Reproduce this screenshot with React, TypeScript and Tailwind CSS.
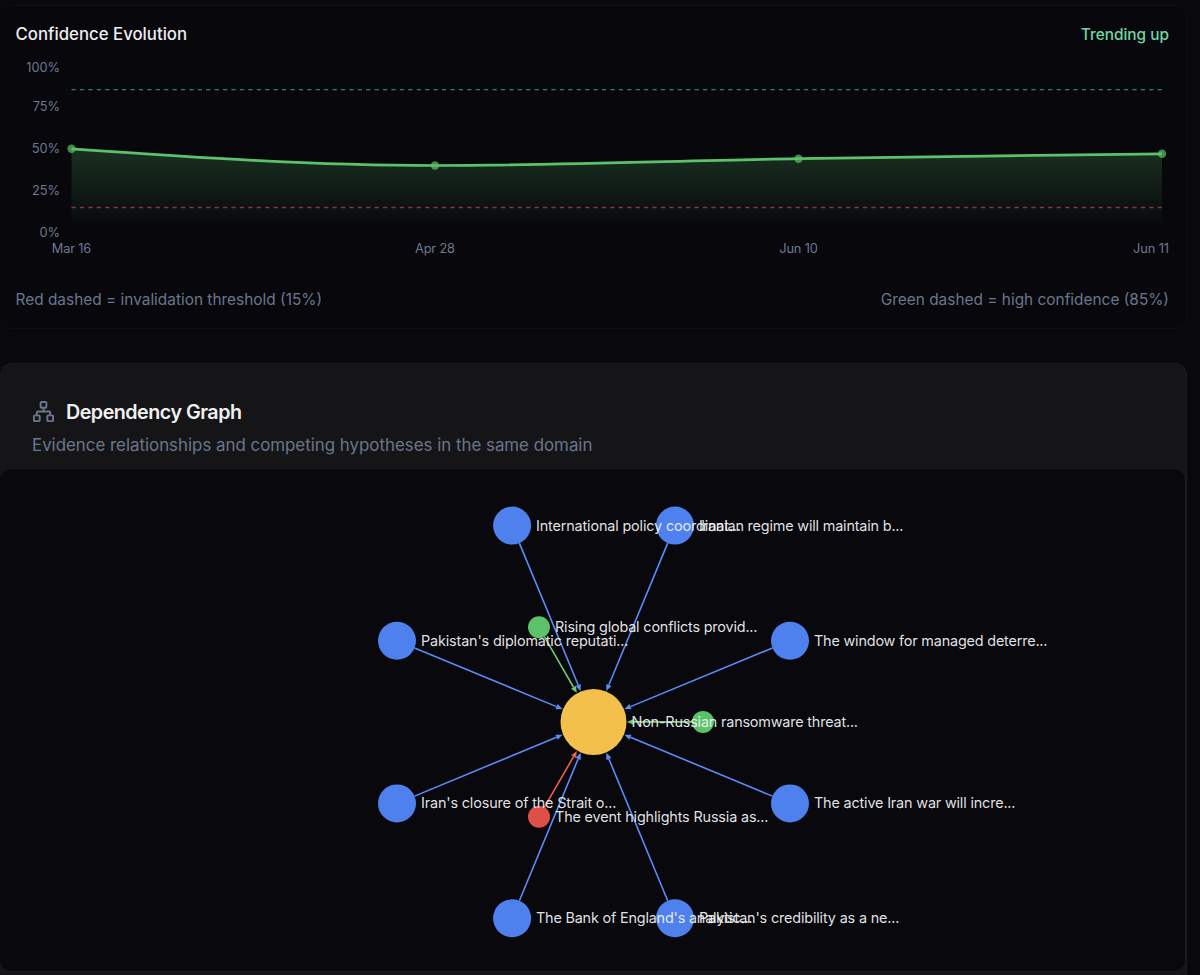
import React from "react";
import { Network } from "lucide-react";

type GraphNode = { x: number; y: number; r: number; fill: string; line: string; label: string; lx: number; w: number };

const CENTER = { x: 593.5, y: 721.9 };
const BLUE = "#4f81ee";
const BLUE_LINE = "#5b8cf7";
const GREEN = "#5cc26a";
const RED = "#dd5048";

const nodes: GraphNode[] = [
  { x: 512.1, y: 525.6, r: 19, fill: BLUE, line: BLUE_LINE, label: "International policy coordinat...", lx: 536, w: 205 },
  { x: 675, y: 525.6, r: 19, fill: BLUE, line: BLUE_LINE, label: "Iranian regime will maintain b...", lx: 699, w: 204.5 },
  { x: 397, y: 640.7, r: 19, fill: BLUE, line: BLUE_LINE, label: "Pakistan's diplomatic reputati...", lx: 421, w: 207.5 },
  { x: 790, y: 640.7, r: 19, fill: BLUE, line: BLUE_LINE, label: "The window for managed deterre...", lx: 814, w: 233.5 },
  { x: 397, y: 803.4, r: 19, fill: BLUE, line: BLUE_LINE, label: "Iran's closure of the Strait o...", lx: 421, w: 195.5 },
  { x: 790, y: 803.4, r: 19, fill: BLUE, line: BLUE_LINE, label: "The active Iran war will incre...", lx: 814, w: 201.5 },
  { x: 512.1, y: 918.3, r: 19, fill: BLUE, line: BLUE_LINE, label: "The Bank of England's analytic...", lx: 536, w: 216.5 },
  { x: 675, y: 918.3, r: 19, fill: BLUE, line: BLUE_LINE, label: "Pakistan's credibility as a ne...", lx: 699, w: 200.5 },
  { x: 539, y: 627.3, r: 11, fill: GREEN, line: "#6cc972", label: "Rising global conflicts provid...", lx: 555, w: 202.5 },
  { x: 703, y: 721.9, r: 11, fill: GREEN, line: "#6cc972", label: "", lx: 0, w: 0 },
  { x: 539, y: 816.7, r: 11, fill: RED, line: "#e8604f", label: "The event highlights Russia as...", lx: 555, w: 213.5 },
];

function Edge({ node }: { node: GraphNode }) {
  const dx = CENTER.x - node.x;
  const dy = CENTER.y - node.y;
  const len = Math.hypot(dx, dy);
  const ux = dx / len;
  const uy = dy / len;
  const tx = CENTER.x - ux * 33.5;
  const ty = CENTER.y - uy * 33.5;
  const bx = tx - ux * 6.5;
  const by = ty - uy * 6.5;
  return (
    <g>
      <line x1={node.x + ux * node.r} y1={node.y + uy * node.r} x2={bx} y2={by} stroke={node.line} strokeWidth="1.6" />
      <polygon
        points={`${tx},${ty} ${bx - uy * 2.8},${by + ux * 2.8} ${bx + uy * 2.8},${by - ux * 2.8}`}
        fill={node.line}
      />
    </g>
  );
}

function Graph() {
  return (
    <svg className="block h-[502px] w-[1185px] font-['Inter',sans-serif]" viewBox="0 469 1185 502">
      {nodes.map((n, i) => (
        <Edge key={i} node={n} />
      ))}
      {nodes.map((n, i) => (
        <circle key={i} cx={n.x} cy={n.y} r={n.r} fill={n.fill} />
      ))}
      <circle cx={CENTER.x} cy={CENTER.y} r="33" fill="#f3c14b" />
      <g fill="#f0f1f3" fillOpacity="0.94" fontSize="14.4">
        {nodes
          .filter((n) => n.label)
          .map((n) => (
            <text key={n.label} x={n.lx} y={n.y + 5} textLength={n.w}>
              {n.label}
            </text>
          ))}
        <text x="631.5" y="727" textLength="226.5">
          Non-Russian ransomware threat...
        </text>
      </g>
    </svg>
  );
}

const yTicks = [
  { label: "100%", y: 71.5 },
  { label: "75%", y: 111 },
  { label: "50%", y: 153 },
  { label: "25%", y: 195 },
  { label: "0%", y: 237 },
];
const points = [
  { x: 71.5, y: 148.8, label: "Mar 16", lx: 71.5, w: 39.5 },
  { x: 435, y: 165.5, label: "Apr 28", lx: 435, w: 40 },
  { x: 798.5, y: 158.7, label: "Jun 10", lx: 798.5, w: 38.5 },
  { x: 1162, y: 153.8, label: "Jun 11", lx: 1151, w: 36 },
];
const curve =
  "M71.5 148.8 C192.7 157.2 313.8 165.5 435 165.5 C556.2 165.5 677.3 160.7 798.5 158.7 C919.7 156.8 1040.8 155.3 1162 153.8";

function ConfidenceChart() {
  return (
    <svg className="block h-[210px] w-[1186px] shrink-0 font-['Inter',sans-serif]" viewBox="0 55 1186 210">
      <defs>
        <linearGradient id="confidence" x1="0" y1="149" x2="0" y2="232" gradientUnits="userSpaceOnUse">
          <stop offset="0" stopColor="#5cc26a" stopOpacity="0.22" />
          <stop offset="0.92" stopColor="#5cc26a" stopOpacity="0.01" />
          <stop offset="1" stopColor="#5cc26a" stopOpacity="0" />
        </linearGradient>
      </defs>
      <path d={`${curve} V232 H71.5 Z`} fill="url(#confidence)" />
      <line x1="71.5" x2="1162" y1="89.6" y2="89.6" stroke="#2f8a48" strokeWidth="1.3" strokeDasharray="4.21 4.21" />
      <line x1="71.5" x2="1162" y1="207.5" y2="207.5" stroke="#8a3632" strokeWidth="1.3" strokeDasharray="4.21 4.21" />
      <path d={curve} fill="none" stroke="#5cc26a" strokeWidth="2.7" />
      <g fill="#6f798f" fontSize="12.8">
        {yTicks.map((t) => (
          <text key={t.label} x="60.2" y={t.y} textAnchor="end">
            {t.label}
          </text>
        ))}
        {points.map((p) => (
          <text key={p.label} x={p.lx} y="253.3" textAnchor="middle" textLength={p.w}>
            {p.label}
          </text>
        ))}
      </g>
      {points.map((p) => (
        <circle key={p.label} cx={p.x} cy={p.y} r="4.2" fill="#5cc26a" fillOpacity="0.7" />
      ))}
    </svg>
  );
}

export default function App() {
  return (
    <main className="h-[975px] w-[1200px] overflow-hidden bg-[#08080d] pt-[5px] font-['Inter',sans-serif]">
      <section className="flex h-[324px] w-[1187px] flex-col rounded-xl border border-l-0 border-[#0f0f14] bg-[#07070c]">
        <header className="flex h-[49px] shrink-0 items-center justify-between pt-[8px] pr-[17px] pl-[15.5px]">
          <h2 className="text-[16.8px] font-medium text-[#ededef]">Confidence Evolution</h2>
          <span className="pt-px text-[15.4px] font-medium text-[#6fd6a3]">Trending up</span>
        </header>
        <ConfidenceChart />
        <footer className="flex justify-between pt-[23px] pr-[17px] pl-[15.5px] text-[15.42px] leading-6 text-[#6b768c]">
          <span>Red dashed = invalidation threshold (15%)</span>
          <span>Green dashed = high confidence (85%)</span>
        </footer>
      </section>
      <section className="mt-[34px] h-[640px] w-[1187px] rounded-xl border border-l-0 border-[#1c1c1f] bg-[#151517]">
        <header className="h-[104px] pt-[34px] pl-[32px]">
          <div className="flex h-7 items-center gap-[11px]">
            <Network className="mb-px size-[23px] text-[#6b768c]" strokeWidth={2} />
            <h2 className="pt-px text-[19.7px] font-semibold tracking-[-0.5px] text-[#f0f0f1]">Dependency Graph</h2>
          </div>
          <p className="mt-[7px] text-[16.86px] leading-6 text-[#6b768c]">
            Evidence relationships and competing hypotheses in the same domain
          </p>
        </header>
        <div className="h-[504px] w-[1186px] overflow-hidden rounded-xl border border-l-0 border-[#1c1c20] bg-[#08080d]">
          <Graph />
        </div>
      </section>
    </main>
  );
}
